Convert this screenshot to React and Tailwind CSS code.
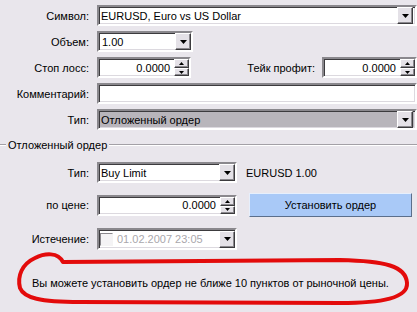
import React from 'react';

// Classic Win32 look: sunken fields, raised buttons
const sunken =
  'border-2 border-t-[#8a888d] border-l-[#8a888d] border-b-white border-r-white shadow-[inset_1px_1px_0_#3c3b3e,inset_-1px_-1px_0_#dcd9df]';
const raised =
  'border border-t-white border-l-white border-b-[#3c3b3e] border-r-[#3c3b3e] shadow-[inset_-1px_-1px_0_#8a888d]';

const Arrow = ({ color = '#000' }) => (
  <svg width="7" height="4" viewBox="0 0 7 4">
    <path d="M0 0h7L3.5 4z" fill={color} />
  </svg>
);

const DropButton = ({ color }) => (
  <div className={`w-[16px] h-[17px] shrink-0 bg-[#e4e1e7] flex items-center justify-center ${raised}`}>
    <Arrow color={color} />
  </div>
);

const Spinner = () => (
  <div className="w-[15px] h-[17px] shrink-0 flex flex-col">
    <div className={`h-[9px] bg-[#e4e1e7] flex items-center justify-center ${raised}`}>
      <svg width="5" height="3" viewBox="0 0 5 3">
        <path d="M2.5 0L5 3H0z" fill="#000" />
      </svg>
    </div>
    <div className={`h-[8px] bg-[#e4e1e7] flex items-center justify-center ${raised}`}>
      <svg width="5" height="3" viewBox="0 0 5 3">
        <path d="M0 0h5L2.5 3z" fill="#000" />
      </svg>
    </div>
  </div>
);

const Label = ({ children }) => (
  <div className="w-[90px] shrink-0 text-right pr-[1px]">{children}</div>
);

export default function App() {
  return (
    <div
      className="relative w-[417px] h-[312px] overflow-hidden bg-[#e9e6ec] text-black text-[11px] leading-[14px]"
      style={{ fontFamily: '"Liberation Sans", Arial, sans-serif' }}
    >
      {/* Top form */}
      <div className="pt-[5px] flex flex-col gap-[5px]">
        <div className="flex items-center h-[21px]">
          <Label>Символ:</Label>
          <div className={`ml-[7px] w-[322px] h-[21px] bg-white flex items-center ${sunken}`}>
            <span className="flex-1 pl-[2px]">EURUSD, Euro vs US Dollar</span>
            <div className="mr-[2px]"><DropButton /></div>
          </div>
        </div>

        <div className="flex items-center h-[21px]">
          <Label>Объем:</Label>
          <div className={`ml-[7px] w-[96px] h-[21px] bg-white flex items-center ${sunken}`}>
            <span className="flex-1 pl-[3px]">1.00</span>
            <DropButton />
          </div>
        </div>

        <div className="flex items-center h-[21px]">
          <Label>Стоп лосс:</Label>
          <div className={`ml-[7px] w-[96px] h-[21px] bg-white flex items-center ${sunken}`}>
            <span className="flex-1 text-right pr-[4px]">0.0000</span>
            <Spinner />
          </div>
          <div className="w-[125px] shrink-0 text-right pr-[1px]">Тейк профит:</div>
          <div className={`ml-[6px] w-[97px] h-[21px] bg-white flex items-center ${sunken}`}>
            <span className="flex-1 text-right pr-[4px]">0.0000</span>
            <Spinner />
          </div>
        </div>

        <div className="flex items-center h-[21px]">
          <Label>Комментарий:</Label>
          <div className={`ml-[7px] w-[322px] h-[21px] bg-white ${sunken}`} />
        </div>

        <div className="flex items-center h-[21px]">
          <Label>Тип:</Label>
          <div className={`ml-[7px] w-[322px] h-[21px] bg-[#b8b5bb] flex items-center ${sunken}`}>
            <span className="flex-1 pl-[2px]">Отложенный ордер</span>
            <div className="mr-[2px]"><DropButton /></div>
          </div>
        </div>
      </div>

      {/* Group box header */}
      <div className="mt-[8px] h-[14px] flex items-center">
        <div className="w-[6px] h-[2px] border-t border-t-[#a3a0a6] border-b border-b-white" />
        <span className="px-[2px]">Отложенный ордер</span>
        <div className="flex-1 h-[2px] border-t border-t-[#a3a0a6] border-b border-b-white" />
      </div>

      {/* Pending order */}
      <div className="mt-[10px] flex items-center h-[21px]">
        <Label>Тип:</Label>
        <div className={`ml-[7px] w-[140px] h-[21px] bg-white flex items-center ${sunken}`}>
          <span className="flex-1 pl-[2px]">Buy Limit</span>
          <DropButton />
        </div>
        <span className="ml-[9px]">EURUSD 1.00</span>
      </div>

      <div className="mt-[10px] flex items-center h-[24px]">
        <Label>по цене:</Label>
        <div className={`ml-[7px] w-[140px] h-[21px] bg-white flex items-center ${sunken}`}>
          <span className="flex-1 text-right pr-[4px]">0.0000</span>
          <Spinner />
        </div>
        <button className="ml-[12px] w-[163px] h-[24px] bg-[#a9c9f7] border border-t-[#e6effc] border-l-[#e6effc] border-b-[#5b6f8c] border-r-[#5b6f8c] text-black">
          Установить ордер
        </button>
      </div>

      <div className="mt-[11px] flex items-center h-[22px]">
        <Label>Истечение:</Label>
        <div className={`ml-[7px] w-[140px] h-[22px] bg-white flex items-center ${sunken}`}>
          <div className="ml-[1px] w-[13px] h-[13px] border border-t-[#8a888d] border-l-[#8a888d] border-b-[#f4f4f4] border-r-[#f4f4f4] bg-[#f4f3f5]" />
          <span className="flex-1 pl-[4px] text-[#a9a7ac]">01.02.2007 23:05</span>
          <DropButton />
        </div>
      </div>

      {/* Note */}
      <div className="mt-[26px] pl-[32px]">
        Вы можете установить ордер не ближе 10 пунктов от рыночной цены.
      </div>

      {/* Red annotation drawn over the form */}
      <svg className="absolute left-0 top-0 pointer-events-none" width="417" height="312" viewBox="0 0 417 312">
        <path
          d="M63 262 C58 252, 45 253, 35 258 C22 264, 17 276, 20 288 C24 298, 40 302, 80 302 L340 303 C382 303, 408 298, 407 283 C406 266, 385 261, 340 260 L63 262 Z"
          fill="none"
          stroke="#e30b0b"
          strokeWidth="4"
          strokeLinejoin="round"
        />
      </svg>
    </div>
  );
}
